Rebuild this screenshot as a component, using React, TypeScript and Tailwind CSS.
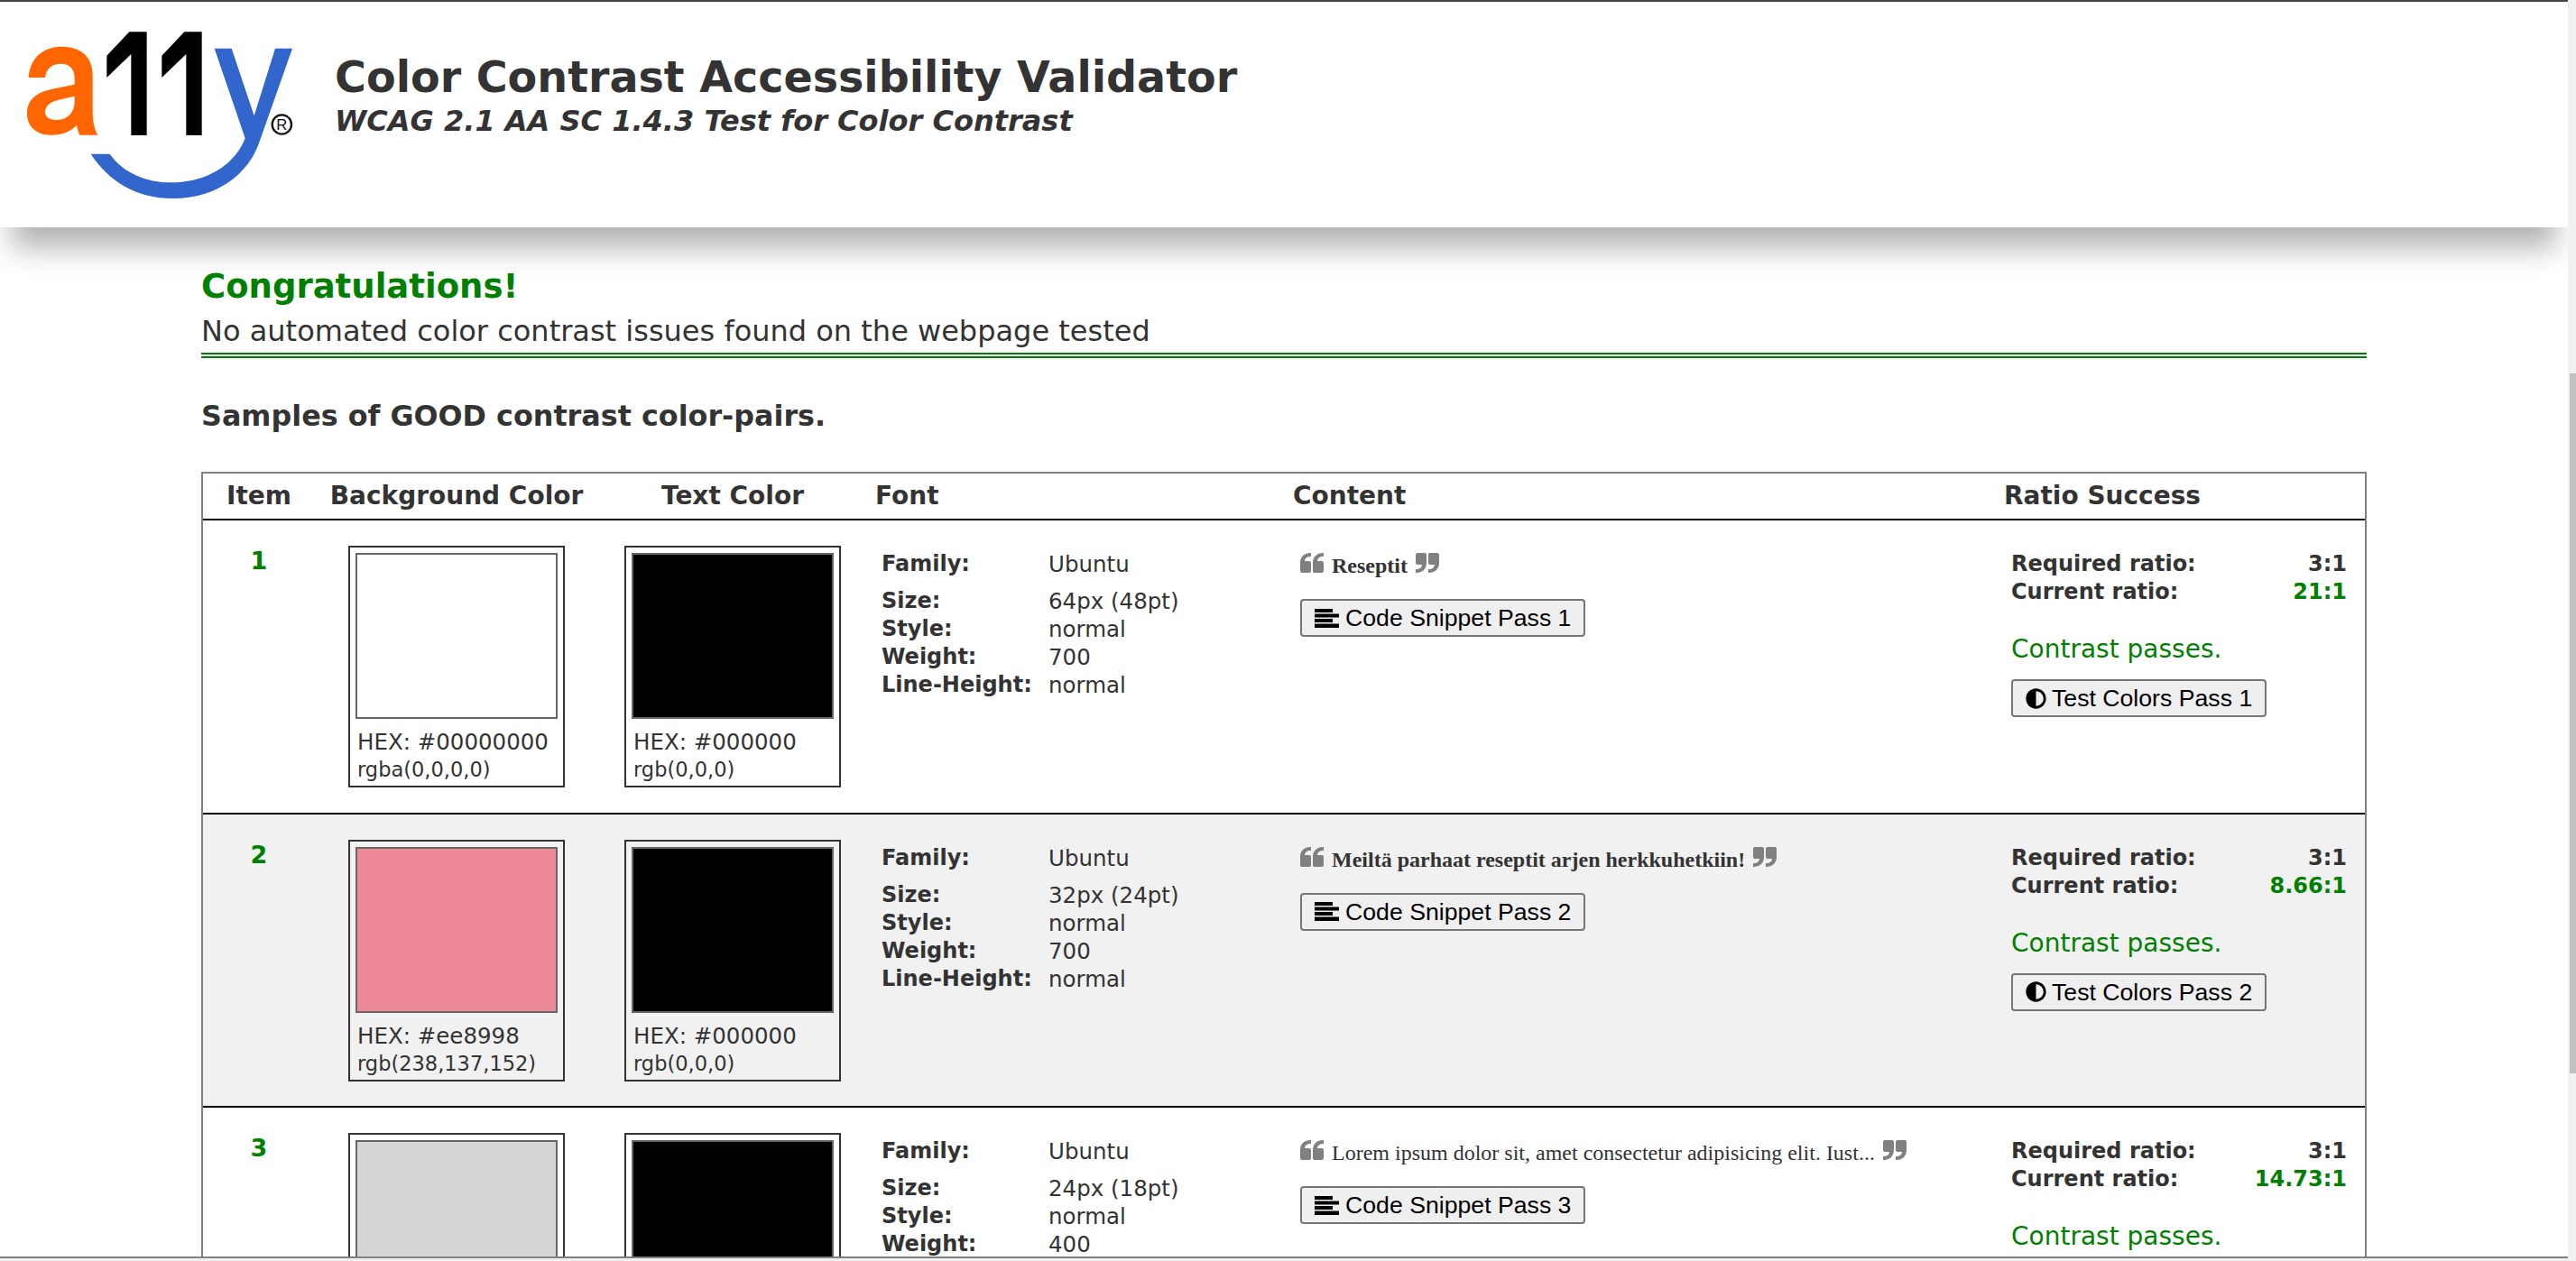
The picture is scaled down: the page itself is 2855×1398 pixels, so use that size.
import { FaAdjust } from "react-icons/fa";

function Logo() {
  return (
    <svg viewBox="0 0 1080 720" className="w-[360px] h-[240px] shrink-0 -mt-[2px]">
      <path
        fillRule="evenodd"
        fill="#ff6600"
        d="M95 258C100 190 145 155 205 155C270 155 308 190 308 250L308 370C308 405 314 430 325 449L265 449C260 438 257 428 255 416C235 438 205 449 170 449C120 449 90 420 90 378C90 325 130 305 180 295L248 281L248 260C248 230 232 212 203 212C172 212 154 228 150 258ZM248 320L195 332C165 339 150 353 150 373C150 390 165 399 185 399C225 399 248 375 248 335Z"
      />
      <path fill="#000" d="M430 106L488 106L488 450L436 450L436 180L355 258L355 185Z" />
      <path fill="#000" d="M613 106L671 106L671 450L619 450L619 180L538 258L538 185Z" />
      <path
        fill="#3366cc"
        d="M713 161L770 161L845 385L915 161L972 161L865 465C825 590 710 660 575 660C450 660 360 600 302 512L365 512C410 575 485 607 570 607C685 607 780 550 815 460Z"
      />
      <circle cx="937" cy="414" r="32" fill="none" stroke="#111" strokeWidth="7" />
      <text x="937" y="432" textAnchor="middle" fontSize="50" fontFamily="Liberation Sans, sans-serif" fill="#111">R</text>
    </svg>
  );
}

const quoteBlock = "M0 20V11C0 4 5 0 11 0H12V4H11C8 4 5 6 5 9H10Q12 9 12 11V20Q12 22 10 22H2Q0 22 0 20Z";

function Quote({ flip }: { flip?: boolean }) {
  return (
    <svg viewBox="0 0 26 22" className={`w-[26px] h-[22px] shrink-0 fill-[#808080] ${flip ? "rotate-180" : ""}`}>
      <path d={quoteBlock} />
      <path d={quoteBlock} transform="translate(14 0)" />
    </svg>
  );
}

function AlignIcon() {
  return (
    <svg viewBox="0 0 27 21" className="w-[27px] h-[21px] shrink-0 fill-black">
      <rect x="0" y="0" width="20" height="4" />
      <rect x="0" y="5.5" width="27" height="4" />
      <rect x="0" y="11" width="20" height="4" />
      <rect x="0" y="16.5" width="27" height="4.5" />
    </svg>
  );
}

function Swatch({ color, hex, rgb, cut }: { color: string; hex: string; rgb: string; cut?: boolean }) {
  return (
    <div className="w-[240px] h-[268px] border-2 border-[#333] px-[6px] pt-[6px] text-[#333]">
      <div className="w-[224px] h-[184px] border-2 border-[#666]" style={{ backgroundColor: color }} />
      {!cut && (
        <>
          <div className="mt-[10px] pl-[2px] text-[24.5px] leading-[32px]">{hex}</div>
          <div className="-mt-[1px] pl-[2px] text-[22.5px] leading-[30px]">{rgb}</div>
        </>
      )}
    </div>
  );
}

function Btn({ icon, label }: { icon: React.ReactNode; label: string }) {
  return (
    <button className="h-[42px] px-[14px] flex items-center gap-[7px] border-2 border-[#767676] rounded-[4px] bg-[#efefef] text-black text-[26.67px] font-['Liberation_Sans',Arial,sans-serif] whitespace-nowrap">
      {icon}
      {label}
    </button>
  );
}

type Row = {
  n: number;
  bg: string;
  hex: string;
  rgb: string;
  size: string;
  weight: string;
  content: string;
  contentBold: boolean;
  ratio: string;
  shade: boolean;
  cut?: boolean;
};

const rows: Row[] = [
  { n: 1, bg: "#ffffff", hex: "HEX: #00000000", rgb: "rgba(0,0,0,0)", size: "64px (48pt)", weight: "700", content: "Reseptit", contentBold: true, ratio: "21:1", shade: false },
  { n: 2, bg: "#ee8998", hex: "HEX: #ee8998", rgb: "rgb(238,137,152)", size: "32px (24pt)", weight: "700", content: "Meiltä parhaat reseptit arjen herkkuhetkiin!", contentBold: true, ratio: "8.66:1", shade: true },
  { n: 3, bg: "#d6d6d6", hex: "", rgb: "", size: "24px (18pt)", weight: "400", content: "Lorem ipsum dolor sit, amet consectetur adipisicing elit. Iust...", contentBold: false, ratio: "14.73:1", shade: false, cut: true },
];

function TableRow({ r }: { r: Row }) {
  return (
    <div className={`flex h-[325.5px] border-b-2 border-black pt-[28px] ${r.shade ? "bg-[#f1f1f1]" : "bg-white"}`}>
      <div className="w-[124px] shrink-0 text-center text-[27px] leading-[34px] font-bold text-[#008000]">{r.n}</div>
      <div className="w-[314px] shrink-0 flex justify-center">
        <Swatch color={r.bg} hex={r.hex} rgb={r.rgb} cut={r.cut} />
      </div>
      <div className="w-[298px] shrink-0 flex justify-center">
        <Swatch color="#000000" hex="HEX: #000000" rgb="rgb(0,0,0)" cut={r.cut} />
      </div>
      <div className="w-[464px] shrink-0 pl-[16px] pt-[5px] text-[24.5px] leading-[31px] text-[#333]">
        <div className="flex mb-[10px]">
          <b className="w-[185px] text-[24px]">Family:</b>
          <span>Ubuntu</span>
        </div>
        <div className="flex">
          <b className="w-[185px] text-[24px]">Size:</b>
          <span>{r.size}</span>
        </div>
        <div className="flex">
          <b className="w-[185px] text-[24px]">Style:</b>
          <span>normal</span>
        </div>
        <div className="flex">
          <b className="w-[185px] text-[24px]">Weight:</b>
          <span>{r.weight}</span>
        </div>
        {!r.cut && (
          <div className="flex">
            <b className="w-[185px] text-[24px]">Line-Height:</b>
            <span>normal</span>
          </div>
        )}
      </div>
      <div className="w-[788px] shrink-0 pl-[16px] pt-[8px]">
        <div className="flex items-start h-[30px]">
          <Quote />
          <span
            className={`mx-[9px] -mt-[1px] text-[24px] leading-[30px] text-[#333] font-['Liberation_Serif',serif] ${r.contentBold ? "font-bold" : ""}`}
          >
            {r.content}
          </span>
          <Quote flip />
        </div>
        <div className="mt-[21px] flex">
          <Btn icon={<AlignIcon />} label={`Code Snippet Pass ${r.n}`} />
        </div>
      </div>
      <div className="flex-1 pl-[16px] pr-[20px] pt-[5px]">
        <div className="flex justify-between text-[24px] leading-[31px] font-bold text-[#333]">
          <span>Required ratio:</span>
          <span>3:1</span>
        </div>
        <div className="flex justify-between text-[24px] leading-[31px] font-bold text-[#333]">
          <span>Current ratio:</span>
          <span className="text-[#008000]">{r.ratio}</span>
        </div>
        <div className="mt-[30px] text-[28px] leading-[36px] text-[#008000]">Contrast passes.</div>
        {!r.cut && (
          <div className="mt-[15px] flex">
            <Btn icon={<FaAdjust className="w-[23px] h-[23px] -mr-[1px]" />} label={`Test Colors Pass ${r.n}`} />
          </div>
        )}
      </div>
    </div>
  );
}

export default function App() {
  return (
    <div className="h-[1398px] w-[2855px] overflow-hidden flex bg-white font-['DejaVu_Sans',Verdana,sans-serif] text-[#333]">
      <div className="flex-1 min-w-0 flex flex-col border-t-2 border-[#444]">
        <div className="flex-1 min-h-0 overflow-hidden">
          <header className="h-[250px] flex bg-white shadow-[0_36px_30px_-13px_rgba(0,0,0,0.3)]">
            <Logo />
            <div className="ml-[11px] pt-[56px]">
              <h1 className="text-[47.6px] leading-[56px] font-bold">Color Contrast Accessibility Validator</h1>
              <p className="text-[32px] leading-[38px] font-bold italic mt-[1px]">WCAG 2.1 AA SC 1.4.3 Test for Color Contrast</p>
            </div>
          </header>
          <main className="w-[2400px] mx-auto pt-[42px]">
            <h2 className="text-[37px] leading-[48px] font-bold text-[#008000]">Congratulations!</h2>
            <p className="mt-[5px] text-[32px] leading-[40px] border-b-[6px] border-double border-[#008000] pb-[4px]">No automated color contrast issues found on the webpage tested</p>
            <h3 className="mt-[42px] text-[31.8px] leading-[44px] font-bold">Samples of GOOD contrast color-pairs.</h3>
            <div className="mt-[40px] border-x-2 border-t-2 border-[#808080]">
              <div className="flex h-[52px] items-center border-b-2 border-black text-[28px] font-bold">
                <div className="w-[124px] shrink-0 text-center">Item</div>
                <div className="w-[314px] shrink-0 text-center">Background Color</div>
                <div className="w-[298px] shrink-0 text-center">Text Color</div>
                <div className="w-[464px] shrink-0 pl-[9px]">Font</div>
                <div className="w-[788px] shrink-0 pl-[8px]">Content</div>
                <div className="flex-1 pl-[8px]">Ratio Success</div>
              </div>
              {rows.map((r) => (
                <TableRow key={r.n} r={r} />
              ))}
            </div>
          </main>
        </div>
        <div className="h-[5px] shrink-0 border-t-2 border-[#808080] bg-[#f0f0f0]" />
      </div>
      <div className="w-[9px] shrink-0 flex flex-col bg-[#f1f1f1] pt-[414px] pb-[208px]">
        <div className="w-[7px] ml-auto flex-1 bg-[#c1c1c1]" />
      </div>
    </div>
  );
}
